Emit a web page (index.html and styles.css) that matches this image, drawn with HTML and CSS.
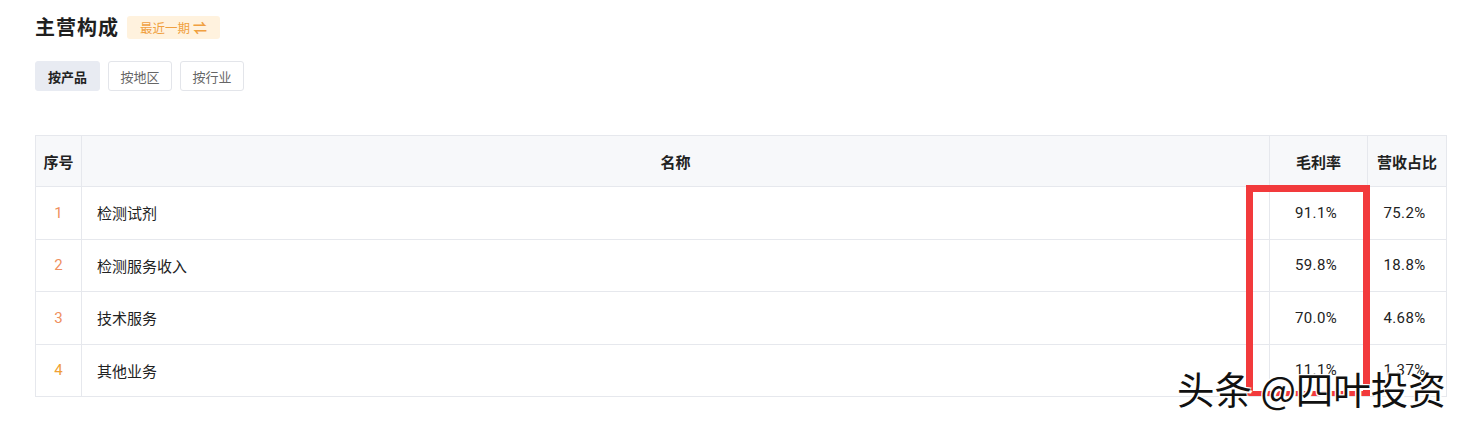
FILE: index.html
```html
<!DOCTYPE html>
<html lang="zh-CN">
<head>
<meta charset="utf-8">
<title>主营构成</title>
<link rel="stylesheet" href="styles.css">
</head>
<body>
<div class="page">
  <div class="head">
    <h2 class="title">主营构成</h2>
    <span class="badge">最近一期 <span class="swap">⇌</span></span>
  </div>
  <div class="tabs">
    <button class="tab active">按产品</button>
    <button class="tab">按地区</button>
    <button class="tab">按行业</button>
  </div>
  <div class="table-wrap">
    <table class="tbl">
      <colgroup>
        <col class="c-idx"><col class="c-name"><col class="c-gm"><col class="c-rev">
      </colgroup>
      <thead>
        <tr><th>序号</th><th>名称</th><th>毛利率</th><th>营收占比</th></tr>
      </thead>
      <tbody>
        <tr><td class="idx">1</td><td class="name">检测试剂</td><td class="num">91.1%</td><td class="num">75.2%</td></tr>
        <tr><td class="idx">2</td><td class="name">检测服务收入</td><td class="num">59.8%</td><td class="num">18.8%</td></tr>
        <tr><td class="idx">3</td><td class="name">技术服务</td><td class="num">70.0%</td><td class="num">4.68%</td></tr>
        <tr><td class="idx idx4">4</td><td class="name">其他业务</td><td class="num">11.1%</td><td class="num">1.37%</td></tr>
      </tbody>
    </table>
    <div class="highlight"></div>
  </div>
</div>
<div class="watermark">头条 @四叶投资</div>
</body>
</html>
```
FILE: styles.css
```css
* { box-sizing: border-box; }
html, body { margin: 0; padding: 0; background: #fff; }
body {
  font-family: "Noto Sans CJK SC", "Noto Sans", sans-serif;
  color: #222;
  width: 1460px;
  height: 424px;
  overflow: hidden;
  position: relative;
}
.page { padding: 13px 13px 0 35px; }
.head { display: flex; align-items: center; gap: 8px; height: 28px; }
.title {
  margin: 0;
  font-size: 20px;
  font-weight: 700;
  line-height: 28px;
  color: #1f1f1f;
  letter-spacing: 1px;
}
.badge {
  display: inline-flex;
  align-items: center;
  height: 23px;
  padding: 0 13px;
  background: #fff2de;
  color: #f0a040;
  font-size: 12.5px;
  border-radius: 3px;
  gap: 3px;
}
.swap { font-size: 14px; font-weight: 700; }
.tabs { display: flex; gap: 8px; margin-top: 20px; }
.tab {
  height: 30px;
  padding: 0 11.5px;
  font-family: inherit;
  font-size: 13px;
  color: #666;
  background: #fff;
  border: 1px solid #e3e5ea;
  border-radius: 3px;
}
.tab.active {
  background: #e8ebf2;
  border-color: #e8ebf2;
  color: #222;
  font-weight: 700;
  padding: 0 12px;
}
.table-wrap { position: relative; margin-top: 44px; width: 1412px; }
.tbl {
  width: 1412px;
  border-collapse: collapse;
  table-layout: fixed;
  font-size: 15px;
}
.c-idx { width: 46px; }
.c-gm { width: 98px; }
.c-rev { width: 79px; }
.tbl th, .tbl td { border: 1px solid #e6e8ed; }
.tbl th {
  height: 51px;
  background: #f7f8fa;
  font-weight: 700;
  font-size: 15px;
  color: #222;
  text-align: center;
}
.tbl td { height: 52.5px; text-align: center; color: #222; }
.tbl td.name { text-align: left; padding-left: 15px; }
.tbl td.num { font-family: Roboto, "Noto Sans", sans-serif; font-size: 15px; letter-spacing: 0.4px; padding-right: 6px; }
.tbl td.idx { font-family: Roboto, sans-serif; color: #ef9060; }
.tbl td.idx4 { color: #f0a035; }
.highlight {
  position: absolute;
  left: 1211px;
  top: 50px;
  width: 124px;
  height: 211px;
  border: 7px solid #f23a3c;
  border-bottom-width: 5px;
}
.watermark {
  position: absolute;
  left: 1177px;
  top: 365px;
  font-size: 37.5px;
  line-height: 46px;
  color: #111;
  font-family: "Noto Sans CJK SC", sans-serif;
  text-shadow: 2px 2px 0 #fff, -1px -1px 0 #fff, 1px -1px 0 #fff, -1px 1px 0 #fff;
}
```
